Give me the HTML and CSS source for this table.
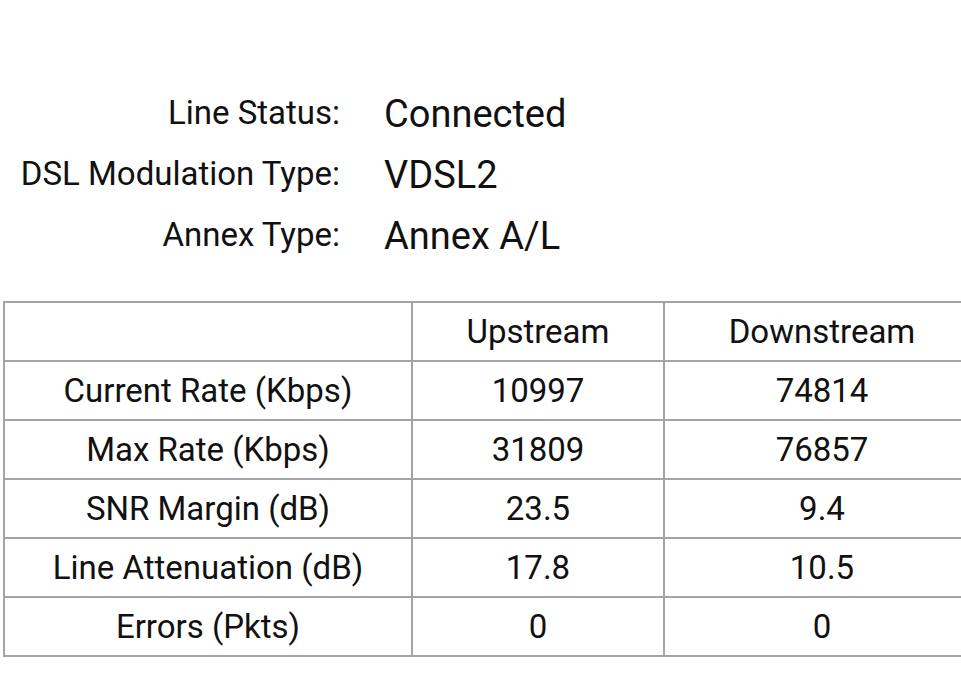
FILE: index.html
```html
<!DOCTYPE html>
<html lang="en">
<head>
<meta charset="utf-8">
<title>DSL Status</title>
<link rel="stylesheet" href="styles.css">
</head>
<body>
<div class="page">
  <div class="info">
    <div class="label">Line Status:</div><div class="value">Connected</div>
    <div class="label">DSL Modulation Type:</div><div class="value">VDSL2</div>
    <div class="label">Annex Type:</div><div class="value">Annex A/L</div>
  </div>
  <table class="stats">
    <colgroup><col class="c1"><col class="c2"><col class="c3"></colgroup>
    <tr><td></td><td>Upstream</td><td>Downstream</td></tr>
    <tr><td>Current Rate (Kbps)</td><td>10997</td><td>74814</td></tr>
    <tr><td>Max Rate (Kbps)</td><td>31809</td><td>76857</td></tr>
    <tr><td>SNR Margin (dB)</td><td>23.5</td><td>9.4</td></tr>
    <tr><td>Line Attenuation (dB)</td><td>17.8</td><td>10.5</td></tr>
    <tr><td>Errors (Pkts)</td><td>0</td><td>0</td></tr>
  </table>
</div>
</body>
</html>
```
FILE: styles.css
```css
html, body {
  margin: 0;
  padding: 0;
  background: #ffffff;
  overflow: hidden;
}
body {
  font-family: Roboto, "Noto Sans", sans-serif;
  color: #111111;
}
.page {
  padding-top: 83px;
  width: 1000px;
}
.info {
  display: grid;
  grid-template-columns: 340px auto;
  column-gap: 43px;
}
.label {
  font-size: 33px;
  line-height: 60px;
  text-align: right;
  white-space: nowrap;
}
.value {
  font-size: 38px;
  line-height: 60px;
  padding-top: 1px;
  padding-left: 1px;
  white-space: nowrap;
}
.stats {
  margin-top: 35px;
  margin-left: 3px;
  border-collapse: collapse;
  table-layout: fixed;
  width: 976px;
}
.stats col.c1 { width: 408px; }
.stats col.c2 { width: 252px; }
.stats col.c3 { width: 316px; }
.stats td {
  border: 2px solid #a4a4a4;
  height: 57px;
  padding: 0;
  font-size: 33px;
  text-align: center;
  vertical-align: middle;
  white-space: nowrap;
}
```
